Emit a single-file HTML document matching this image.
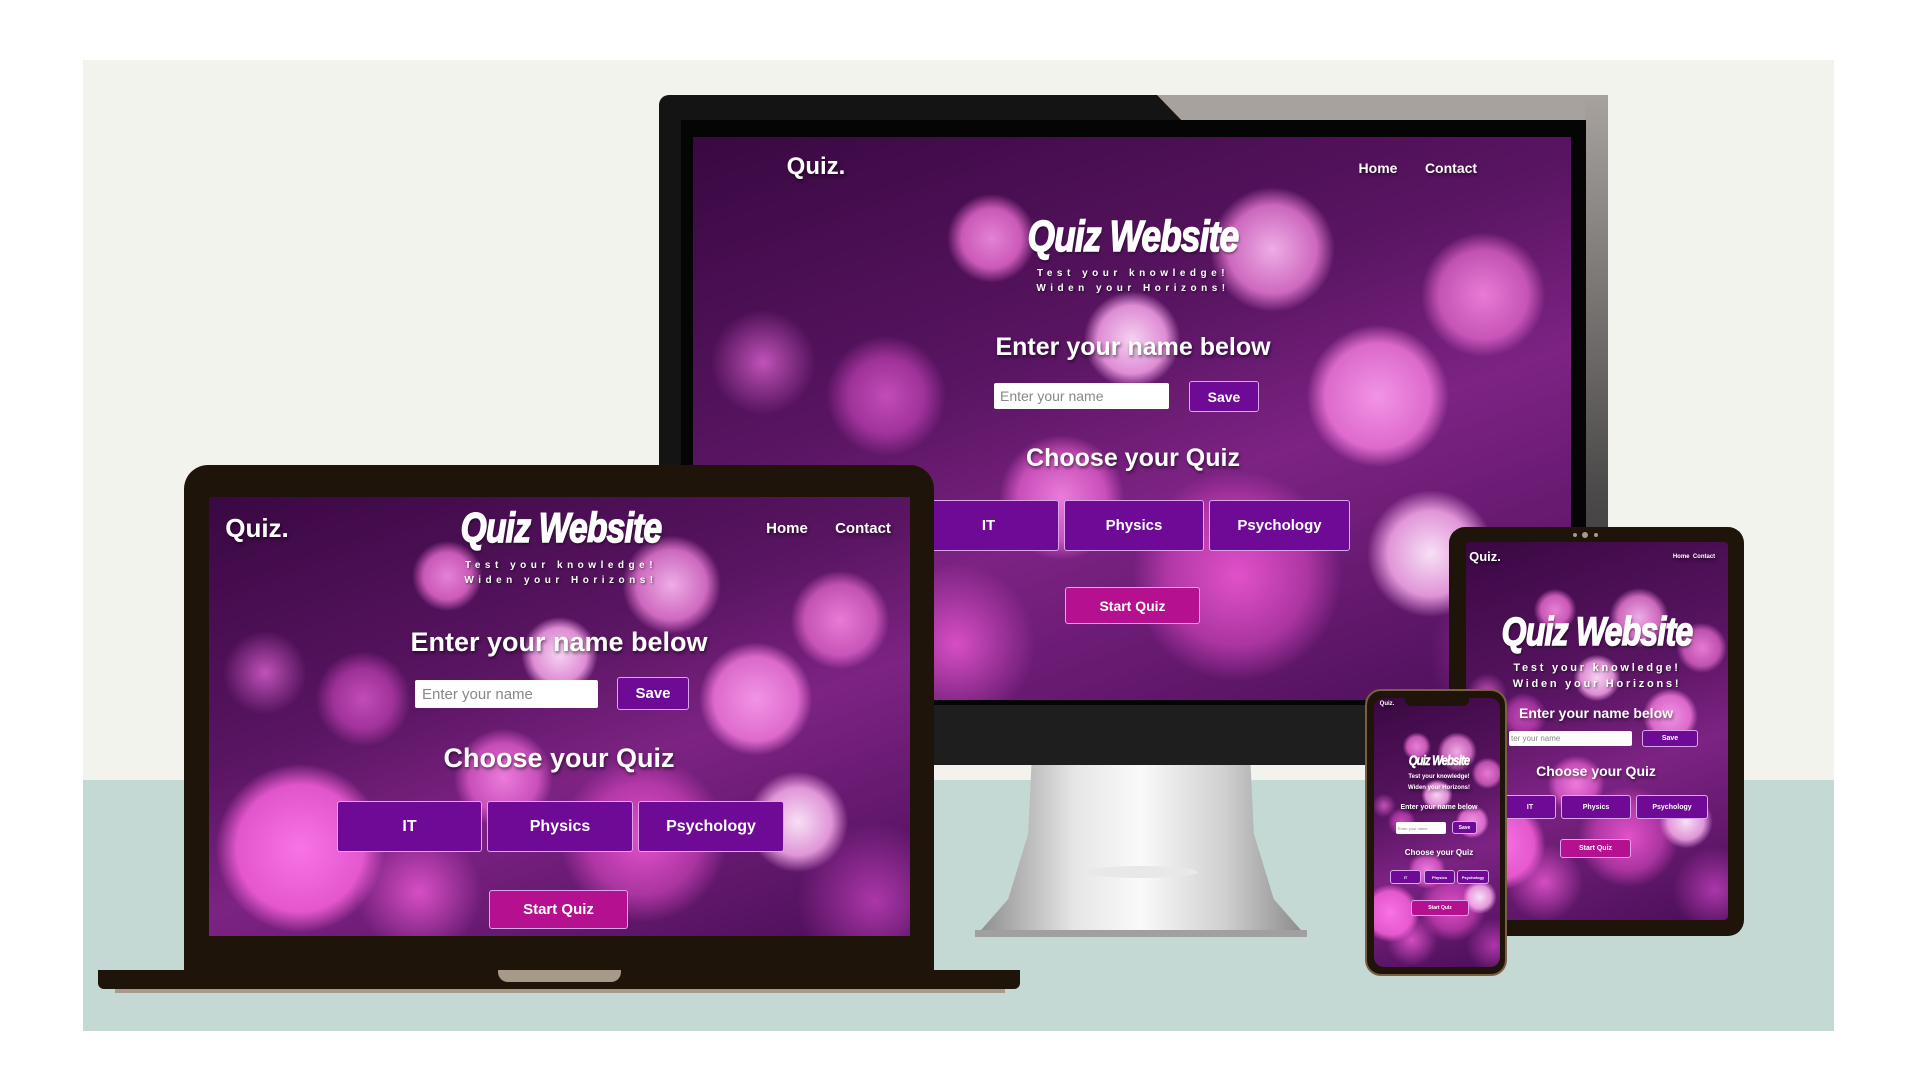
<!DOCTYPE html>
<html><head><meta charset="utf-8"><style>
*{margin:0;padding:0;box-sizing:border-box}
body{width:1920px;height:1080px;background:#fff;position:relative;overflow:hidden;font-family:"Liberation Sans",sans-serif}
.a{position:absolute}
.bk{background:
radial-gradient(circle at 13% 80%,rgba(255,120,235,.95) 0,rgba(255,100,225,.8) 9%,rgba(255,90,220,0) 12%),
radial-gradient(circle at 34% 18%,rgba(255,150,235,.85) 0,rgba(255,120,225,.7) 4%,rgba(255,110,220,0) 6%),
radial-gradient(circle at 50% 36%,rgba(255,220,250,.95) 0,rgba(255,170,240,.8) 6%,rgba(255,110,220,0) 8.5%),
radial-gradient(circle at 66% 20%,rgba(255,190,245,.9) 0,rgba(255,140,230,.7) 6%,rgba(255,110,220,0) 8.5%),
radial-gradient(circle at 78% 46%,rgba(255,160,240,.9) 0,rgba(255,130,230,.75) 7%,rgba(255,110,220,0) 9.5%),
radial-gradient(circle at 90% 28%,rgba(255,140,230,.85) 0,rgba(255,120,225,.6) 5%,rgba(255,110,220,0) 7%),
radial-gradient(circle at 84% 74%,rgba(255,235,252,.95) 0,rgba(255,180,242,.8) 5%,rgba(255,110,220,0) 7.5%),
radial-gradient(circle at 42% 64%,rgba(255,140,235,.85) 0,rgba(255,110,225,.6) 7%,rgba(255,100,220,0) 10%),
radial-gradient(circle at 62% 78%,rgba(245,90,215,.85) 0,rgba(240,80,210,.5) 10%,rgba(240,80,210,0) 15%),
radial-gradient(circle at 22% 46%,rgba(240,100,220,.7) 0,rgba(230,80,210,.5) 5%,rgba(230,80,210,0) 8%),
radial-gradient(circle at 8% 40%,rgba(240,110,225,.7) 0,rgba(230,80,210,0) 6%),
radial-gradient(circle at 30% 90%,rgba(240,90,215,.8) 0,rgba(230,80,210,0) 10%),
radial-gradient(circle at 95% 92%,rgba(210,70,200,.7) 0,rgba(200,60,190,0) 10%),
linear-gradient(160deg,#3a0842 0%,#5a1563 40%,#7d2383 60%,#4a0e58 100%);}
.t{position:absolute;color:#fff;white-space:nowrap;text-shadow:1px 2px 3px rgba(0,0,0,.55);font-weight:bold;transform:translateX(-50%)}
.ttl{font-family:"Liberation Sans Narrow","Liberation Sans",sans-serif;font-style:italic;font-weight:900;letter-spacing:-1px;-webkit-text-stroke:1.5px #fff;transform:translateX(-50%) scaleX(.8)}
.sub{font-weight:bold;color:#fff;letter-spacing:.45em;text-align:center;text-shadow:1px 1px 2px rgba(0,0,0,.6)}
.btn{position:absolute;background:#6e0a96;border:1.5px solid #d9a6ee;color:#fff;font-weight:bold;display:flex;align-items:center;justify-content:center;border-radius:3px}
.st{background:#b4108f}
.inp{position:absolute;background:#fff;color:#888;display:flex;align-items:center;border-radius:2px}
</style></head><body>
<div class="a" style="left:83px;top:60px;width:1751px;height:720px;background:#f3f3ee"></div>
<div class="a" style="left:83px;top:780px;width:1751px;height:251px;background:#c4d9d3"></div>

<!-- monitor stand -->
<div class="a" style="left:975px;top:765px;width:332px;height:172px;background:linear-gradient(90deg,#8a8a8a,#e6e6e6 30%,#fafafa 50%,#d0d0d0 75%,#888);clip-path:polygon(17% 0,83% 0,84% 40%,90% 78%,100% 100%,0 100%,10% 78%,16% 40%)"></div>
<div class="a" style="left:1083px;top:866px;width:115px;height:12px;background:#e8e8e8;border-radius:50%"></div>
<div class="a" style="left:975px;top:930px;width:332px;height:7px;background:#a0a0a0"></div>
<div class="a" style="left:659px;top:95px;width:949px;height:670px;background:#141414;border-radius:10px 10px 0 0"></div>
<div class="a" style="left:1157px;top:95px;width:451px;height:28px;background:#a8a29e;clip-path:polygon(0 0,100% 0,100% 100%,6% 100%);border-radius:0 10px 0 0"></div>
<div class="a" style="left:1585px;top:95px;width:23px;height:670px;background:linear-gradient(#a8a29e,#4a4848 60%,#2a2a2a)"></div>
<div class="a" style="left:681px;top:120px;width:905px;height:585px;background:#050505"></div>
<div class="a" style="left:659px;top:705px;width:949px;height:60px;background:#1e1e1e"></div>
<div class="a bk" style="left:693px;top:137px;width:878px;height:563px"></div>
<div class="t" style="left:816px;top:153px;font-size:24px">Quiz.</div>
<div class="t" style="left:1378px;top:160px;font-size:14px">Home</div>
<div class="t" style="left:1451px;top:160px;font-size:14px">Contact</div>
<div class="t ttl" style="left:1133px;top:212px;font-size:44px">Quiz Website</div>
<div class="a sub" style="left:1000px;top:266px;width:266px;font-size:10px;line-height:15px">Test your knowledge!<br>Widen your Horizons!</div>
<div class="t" style="left:1133px;top:333px;font-size:25px">Enter your name below</div>
<div class="inp" style="left:994px;top:383px;width:175px;height:26px;font-size:14px;padding-left:6px">Enter your name</div>
<div class="btn" style="left:1189px;top:381px;width:70px;height:31px;font-size:14px">Save</div>
<div class="t" style="left:1133px;top:444px;font-size:25px">Choose your Quiz</div>
<div class="btn" style="left:918px;top:500px;width:141px;height:51px;font-size:15px">IT</div>
<div class="btn" style="left:1064px;top:500px;width:140px;height:51px;font-size:15px">Physics</div>
<div class="btn" style="left:1209px;top:500px;width:141px;height:51px;font-size:15px">Psychology</div>
<div class="btn st" style="left:1065px;top:587px;width:135px;height:37px;font-size:14px">Start Quiz</div>

<!-- laptop -->
<div class="a" style="left:184px;top:465px;width:750px;height:510px;background:#1e1409;border-radius:24px 24px 0 0"></div>
<div class="a" style="left:98px;top:970px;width:922px;height:19px;background:#1e1409;border-radius:0 0 6px 6px"></div>
<div class="a" style="left:115px;top:989px;width:890px;height:4px;background:#a89a88"></div>
<div class="a" style="left:498px;top:970px;width:123px;height:12px;background:#a89a88;border-radius:0 0 10px 10px"></div>
<div class="a bk" style="left:209px;top:497px;width:701px;height:439px"></div>
<div class="t" style="left:257px;top:513px;font-size:26px">Quiz.</div>
<div class="t ttl" style="left:561px;top:504px;font-size:42px">Quiz Website</div>
<div class="t" style="left:787px;top:520px;font-size:15px">Home</div>
<div class="t" style="left:863px;top:520px;font-size:15px">Contact</div>
<div class="a sub" style="left:426px;top:558px;width:270px;font-size:10px;line-height:15px">Test your knowledge!<br>Widen your Horizons!</div>
<div class="t" style="left:559px;top:627px;font-size:27px">Enter your name below</div>
<div class="inp" style="left:415px;top:680px;width:183px;height:28px;font-size:15px;padding-left:7px">Enter your name</div>
<div class="btn" style="left:617px;top:677px;width:72px;height:33px;font-size:15px">Save</div>
<div class="t" style="left:559px;top:743px;font-size:27px">Choose your Quiz</div>
<div class="btn" style="left:337px;top:801px;width:145px;height:51px;font-size:16px">IT</div>
<div class="btn" style="left:487px;top:801px;width:146px;height:51px;font-size:16px">Physics</div>
<div class="btn" style="left:638px;top:801px;width:146px;height:51px;font-size:16px">Psychology</div>
<div class="btn st" style="left:489px;top:890px;width:139px;height:39px;font-size:15px">Start Quiz</div>

<!-- tablet -->
<div class="a" style="left:1449px;top:527px;width:295px;height:409px;background:#1e1409;border-radius:16px"></div>
<div class="a" style="left:1573px;top:533px;width:4px;height:4px;background:#a89a88;border-radius:50%"></div>
<div class="a" style="left:1582px;top:532px;width:6px;height:6px;background:#a89a88;border-radius:50%"></div>
<div class="a" style="left:1594px;top:533px;width:4px;height:4px;background:#a89a88;border-radius:50%"></div>
<div class="a bk" style="left:1466px;top:542px;width:262px;height:378px;border-radius:4px"></div>
<div class="t" style="left:1485px;top:549px;font-size:13px">Quiz.</div>
<div class="t" style="left:1694px;top:554px;font-size:6px">Home&nbsp; Contact</div>
<div class="t ttl" style="left:1597px;top:610px;font-size:40px">Quiz Website</div>
<div class="a sub" style="left:1500px;top:660px;width:194px;font-size:11px;line-height:16px;letter-spacing:.25em">Test your knowledge!<br>Widen your Horizons!</div>
<div class="t" style="left:1596px;top:705px;font-size:14px">Enter your name below</div>
<div class="inp" style="left:1509px;top:731px;width:123px;height:15px;font-size:8px;padding-left:2px">ter your name</div>
<div class="btn" style="left:1642px;top:730px;width:56px;height:17px;font-size:7px">Save</div>
<div class="t" style="left:1596px;top:763px;font-size:14px">Choose your Quiz</div>
<div class="btn" style="left:1504px;top:795px;width:52px;height:24px;font-size:7px">IT</div>
<div class="btn" style="left:1561px;top:795px;width:70px;height:24px;font-size:7px">Physics</div>
<div class="btn" style="left:1636px;top:795px;width:72px;height:24px;font-size:7px">Psychology</div>
<div class="btn st" style="left:1560px;top:839px;width:71px;height:19px;font-size:7px">Start Quiz</div>

<!-- phone -->
<div class="a" style="left:1365px;top:689px;width:142px;height:287px;background:#1e1409;border:2px solid #7a6040;border-radius:16px"></div>
<div class="a bk" style="left:1374px;top:698px;width:126px;height:269px;border-radius:10px"></div>
<div class="a" style="left:1405px;top:698px;width:64px;height:8px;background:#1e1409;border-radius:0 0 6px 6px"></div>
<div class="t" style="left:1387px;top:701px;font-size:6px">Quiz.</div>
<div class="t ttl" style="left:1439px;top:752px;font-size:14px;-webkit-text-stroke:.5px #fff">Quiz Website</div>
<div class="t" style="left:1439px;top:774px;font-size:6px">Test your knowledge!</div>
<div class="t" style="left:1439px;top:785px;font-size:6px">Widen your Horizons!</div>
<div class="t" style="left:1439px;top:804px;font-size:7px">Enter your name below</div>
<div class="inp" style="left:1396px;top:822px;width:50px;height:12px;font-size:4px;padding-left:2px">Enter your name</div>
<div class="btn" style="left:1452px;top:821px;width:25px;height:13px;font-size:5px">Save</div>
<div class="t" style="left:1439px;top:848px;font-size:8px">Choose your Quiz</div>
<div class="btn" style="left:1390px;top:870px;width:31px;height:14px;font-size:4px">IT</div>
<div class="btn" style="left:1424px;top:870px;width:31px;height:14px;font-size:4px">Physics</div>
<div class="btn" style="left:1457px;top:870px;width:32px;height:14px;font-size:4px">Psychology</div>
<div class="btn st" style="left:1411px;top:900px;width:58px;height:16px;font-size:5px">Start Quiz</div>
</body></html>
